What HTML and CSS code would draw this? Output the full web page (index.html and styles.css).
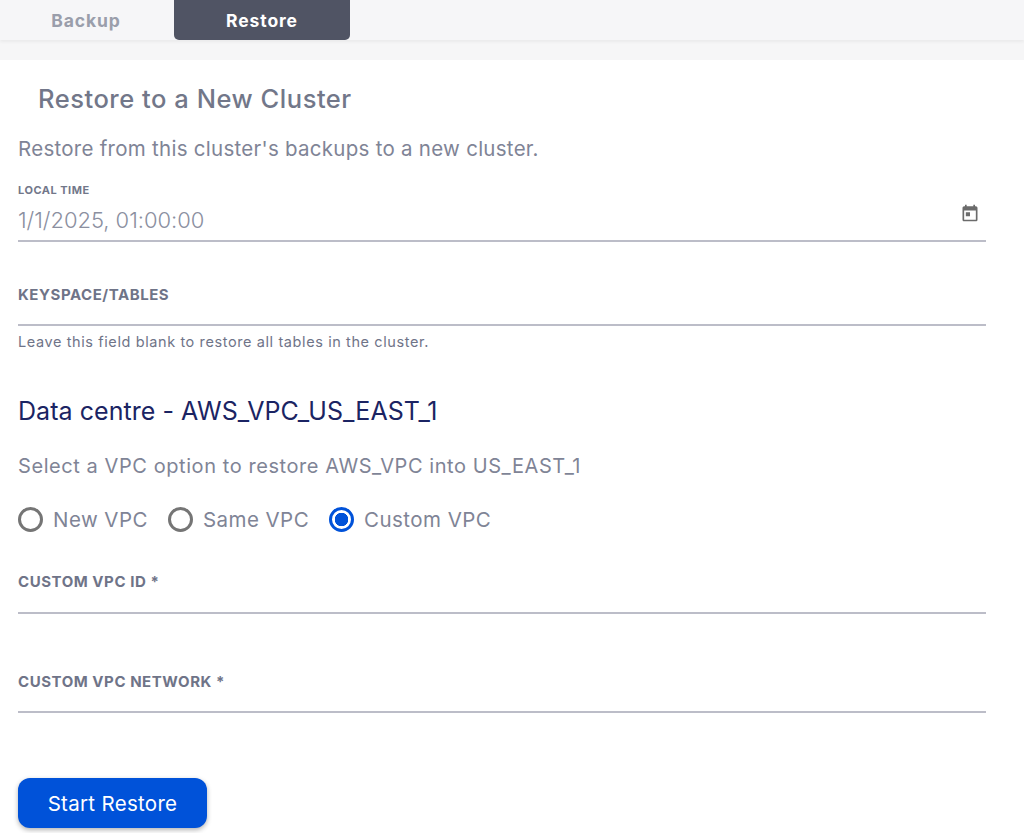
FILE: index.html
```html
<!DOCTYPE html>
<html lang="en">
<head>
<meta charset="utf-8">
<title>Restore</title>
<link rel="stylesheet" href="styles.css">
</head>
<body>
<div class="tabs">
  <div class="tab">Backup</div>
  <div class="tab active">Restore</div>
</div>
<div class="strip"></div>
<main class="content">
  <h2 class="title">Restore to a New Cluster</h2>
  <p class="intro">Restore from this cluster's backups to a new cluster.</p>
  <div class="field time">
    <label class="small-label">LOCAL TIME</label>
    <div class="value-row">
      <span class="value">1/1/2025, 01:00:00</span>
      <svg class="cal" width="20" height="20" viewBox="0 0 24 24" fill="#6b6b6b"><path d="M19 4h-1V2h-2v2H8V2H6v2H5c-1.1 0-2 .9-2 2v14c0 1.1.9 2 2 2h14c1.1 0 2-.9 2-2V6c0-1.1-.9-2-2-2zm0 16H5V9h14v11zM7 11h5v5H7z"/></svg>
    </div>
  </div>
  <div class="field keyspace">
    <label class="label">KEYSPACE/TABLES</label>
  </div>
  <p class="help">Leave this field blank to restore all tables in the cluster.</p>
  <h3 class="dc">Data centre - AWS_VPC_US_EAST_1</h3>
  <p class="select">Select a VPC option to restore AWS_VPC into US_EAST_1</p>
  <div class="radios">
    <div class="radio"><span class="dot"></span>New VPC</div>
    <div class="radio"><span class="dot"></span>Same VPC</div>
    <div class="radio on"><span class="dot"></span>Custom VPC</div>
  </div>
  <div class="field vpc-id"><label class="label">CUSTOM VPC ID *</label></div>
  <div class="field vpc-net"><label class="label">CUSTOM VPC NETWORK *</label></div>
  <button class="start" type="button">Start Restore</button>
</main>
</body>
</html>
```

FILE: styles.css
```css
* { box-sizing: border-box; }
html, body { margin: 0; padding: 0; }
body {
  width: 1024px;
  height: 833px;
  overflow: hidden;
  background: #fff;
  font-family: Inter, "Open Sans", sans-serif;
  color: #7a7f92;
}
.tabs {
  position: relative;
  display: flex;
  height: 40px;
  background: #f6f6f8;
  box-shadow: 0 2px 3px rgba(0,0,0,.05);
}
.tab {
  width: 174px;
  height: 40px;
  text-align: center;
  font-size: 17.5px;
  letter-spacing: .9px;
  font-weight: 700;
  line-height: 41px;
  color: #9a9eab;
  padding-right: 2px;
}
.tab.active {
  width: 176px;
  padding: 0;
  background: #505464;
  color: #fff;
  border-radius: 0 0 5px 5px;
}
.strip { height: 20px; background: #f6f6f7; }
.content { padding: 0 38px 0 18px; }
.title {
  margin: 0;
  padding: 24px 0 0 20px;
  font-size: 25.5px;
  letter-spacing: .53px;
  line-height: 30px;
  font-weight: 500;
  color: #727789;
}
.intro {
  margin: 0;
  padding-top: 23px;
  font-size: 20.5px;
  letter-spacing: .27px;
  line-height: 24px;
  color: #7f8496;
}
.field { border-bottom: 2px solid #bcbdc8; }
.small-label {
  display: block;
  font-size: 11px;
  letter-spacing: .5px;
  line-height: 14px;
  font-weight: 700;
  color: #72778a;
}
.time { margin-top: 22px; height: 59px; }
.value-row { display: flex; justify-content: space-between; align-items: flex-start; }
.value { font-size: 22px; letter-spacing: -.05px; line-height: 31px; padding-top: 8px; color: #8b8f9f; font-weight: 300; }
.cal { margin: 6px 6px 0 0; }
.label {
  display: block;
  font-size: 15px;
  letter-spacing: .55px;
  line-height: 18px;
  font-weight: 700;
  color: #6f7488;
}
.keyspace { margin-top: 44px; height: 40px; }
.help { margin: 7px 0 0; font-size: 14.5px; letter-spacing: .6px; line-height: 18px; color: #6f7488; }
.dc {
  margin: 0;
  padding-top: 44px;
  font-size: 25px;
  letter-spacing: .05px;
  line-height: 32px;
  font-weight: 400;
  color: #1b2463;
}
.select { margin: 0; padding-top: 27px; font-size: 20px; letter-spacing: .57px; line-height: 24px; color: #7f8496; }
.radios { display: flex; margin-top: 28px; height: 26px; }
.radio { display: flex; align-items: center; gap: 10px; font-size: 20.5px; letter-spacing: .45px; margin-right: 20px; color: #7f8496; }
.dot {
  width: 25px;
  height: 25px;
  border: 3px solid #757575;
  border-radius: 50%;
  flex: none;
}
.radio.on .dot {
  border-color: #0052d9;
  background: radial-gradient(circle, #0052d9 0 6.5px, #fff 7px);
}
.vpc-id { margin-top: 41px; height: 41px; }
.vpc-net { margin-top: 59px; height: 40px; }
.start {
  display: block;
  margin-top: 65px;
  width: 189px;
  height: 50px;
  border: 0;
  border-radius: 12px;
  background: #0052d9;
  color: #fff;
  font-family: inherit;
  font-size: 20.5px;
  letter-spacing: .3px;
  box-shadow: 0 2px 5px rgba(0,0,0,.3);
}
```
